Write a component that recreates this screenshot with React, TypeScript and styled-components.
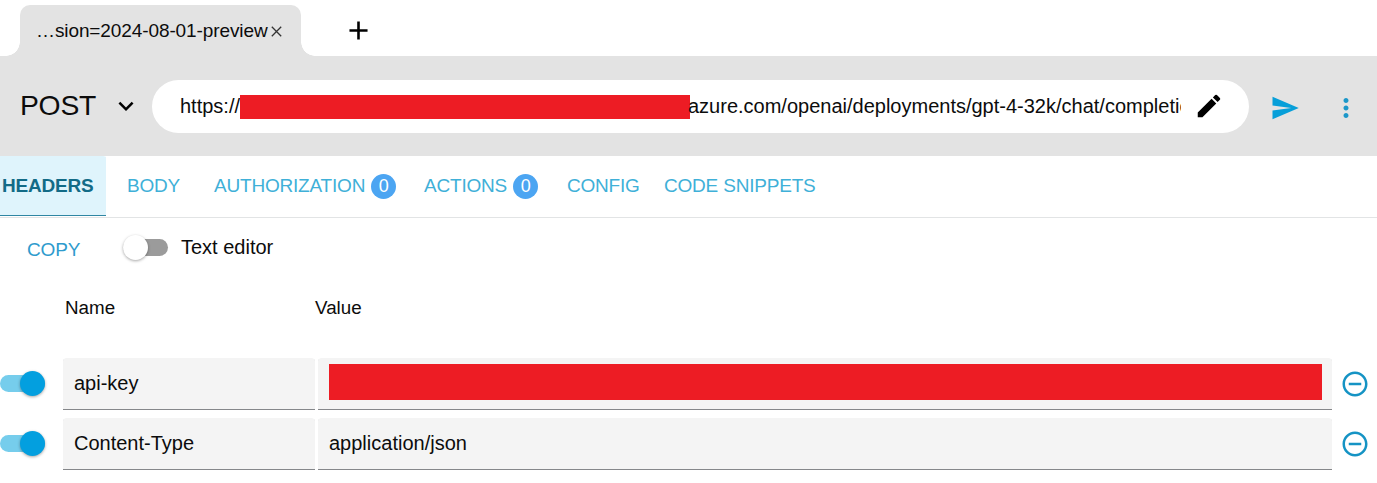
import React from 'react';
import styled, { createGlobalStyle } from 'styled-components';
import {
  MdAdd,
  MdEdit,
  MdExpandMore,
  MdMoreVert,
  MdRemoveCircleOutline,
  MdSend,
} from 'react-icons/md';

const GlobalStyle = createGlobalStyle`
  *, *::before, *::after { box-sizing: border-box; }
  body {
    margin: 0;
    background: #fff;
    color: #0c0c0c;
    font-family: "Liberation Sans", Arial, sans-serif;
    font-size: 20px;
    overflow: hidden;
  }
`;

const Page = styled.div`
  display: flex;
  flex-direction: column;
  width: 1377px;
  height: 483px;
  background: #fff;
`;

const TabStrip = styled.div`
  display: flex;
  height: 56px;
  padding: 5px 0 0 20px;
`;

const RequestTab = styled.div`
  position: relative;
  display: flex;
  align-items: center;
  gap: 3px;
  width: 281px;
  height: 51px;
  padding: 1px 0 0 16px;
  border-radius: 10px 10px 0 0;
  background: #e3e3e3;
  font-size: 19px;
  letter-spacing: -0.1px;
  white-space: nowrap;

  &::before,
  &::after {
    content: '';
    position: absolute;
    bottom: 0;
    width: 14px;
    height: 14px;
  }
  &::before {
    right: 100%;
    background: radial-gradient(circle at 0 0, transparent 13.5px, #e3e3e3 14px);
  }
  &::after {
    left: 100%;
    background: radial-gradient(circle at 100% 0, transparent 13.5px, #e3e3e3 14px);
  }
`;

const NewTab = styled.button`
  display: flex;
  align-items: center;
  margin-left: 42px;
  padding: 0;
  border: 0;
  background: none;
  color: #000;
`;

const RequestBar = styled.div`
  display: flex;
  align-items: center;
  height: 100px;
  padding: 1px 16px 0 20px;
  background: #e3e3e3;
`;

const Method = styled.div`
  display: flex;
  align-items: center;
  justify-content: space-between;
  width: 121px;
  margin: 0 11px 2px 0;
  font-size: 28.3px;
  letter-spacing: -0.25px;
`;

const UrlField = styled.div`
  display: flex;
  align-items: center;
  width: 1097px;
  height: 53px;
  padding: 0 25px 0 28px;
  border-radius: 27px;
  background: #fff;
`;

const UrlText = styled.div`
  display: flex;
  align-items: center;
  width: 1001px;
  margin-right: 13px;
  overflow: hidden;
  white-space: nowrap;
`;

const Scheme = styled.span`
  width: 60px;
`;

const UrlTail = styled.span`
  margin-left: -2px;
`;

const Redacted = styled.span<{ $width: number; $height: number }>`
  flex: none;
  width: ${(p) => p.$width}px;
  height: ${(p) => p.$height}px;
  background: #ed1c24;
`;

const IconButton = styled.button<{
  $left?: number;
  $top?: number;
  $bottom?: number;
  $color?: string;
}>`
  display: flex;
  flex: none;
  margin: 0 0 0 ${(p) => p.$left ?? 0}px;
  padding: ${(p) => p.$top ?? 0}px 0 ${(p) => p.$bottom ?? 0}px;
  border: 0;
  background: none;
  color: ${(p) => p.$color ?? '#079fd9'};
`;

const SectionTabs = styled.div`
  display: flex;
  height: 62px;
  border-bottom: 1px solid #e2e4e5;
`;

const SectionTab = styled.div<{ $width: number; $active?: boolean }>`
  display: flex;
  align-items: center;
  gap: 6px;
  width: ${(p) => p.$width}px;
  height: 60px;
  margin-right: ${(p) => (p.$active ? 19 : 0)}px;
  padding-left: 2px;
  border-radius: 0 3px 0 0;
  background: ${(p) => (p.$active ? '#dff4fc' : 'none')};
  box-shadow: ${(p) => (p.$active ? 'inset 0 -1px #2f86a3' : 'none')};
  color: ${(p) => (p.$active ? '#126b87' : '#3fb0d8')};
  font-size: 19px;
  font-weight: ${(p) => (p.$active ? 700 : 400)};
  letter-spacing: -0.2px;
  white-space: nowrap;
`;

const Count = styled.span`
  display: flex;
  align-items: center;
  justify-content: center;
  width: 25px;
  height: 25px;
  margin-top: 1px;
  padding-bottom: 1px;
  border-radius: 50%;
  background: #4ca5f2;
  color: #fff;
  font-size: 18px;
`;

const Tools = styled.div`
  display: flex;
  align-items: center;
  height: 60px;
  padding: 0 0 2px 27px;
`;

const CopyButton = styled.button`
  width: 96px;
  padding: 5px 0 0;
  border: 0;
  background: none;
  color: #2e9bcd;
  font: inherit;
  font-size: 19px;
  letter-spacing: -0.15px;
  text-align: left;
`;

const Switch = styled.span<{ $on?: boolean }>`
  display: flex;
  flex: none;
  position: relative;
  justify-content: ${(p) => (p.$on ? 'flex-end' : 'flex-start')};
  width: 45px;
  height: 25px;

  &::before {
    content: '';
    position: absolute;
    inset: 4px 0;
    border-radius: 9px;
    background: ${(p) => (p.$on ? '#76cdec' : '#9b9b9b')};
  }
  &::after {
    content: '';
    position: relative;
    width: 25px;
    height: 25px;
    border-radius: 50%;
    background: ${(p) => (p.$on ? '#039fdf' : '#fff')};
    box-shadow: 0 1px 3px rgba(0, 0, 0, 0.35);
  }
`;

const SwitchLabel = styled.span`
  margin-left: 13px;
  color: #0c0c0c;
`;

const ColumnTitles = styled.div`
  display: grid;
  grid-template-columns: 250px 1fr;
  align-items: center;
  height: 60px;
  padding-left: 65px;
  font-size: 18.8px;
`;

const HeaderRows = styled.div`
  display: flex;
  flex-direction: column;
  gap: 8px;
  padding-top: 20px;
`;

const HeaderRow = styled.div`
  display: flex;
  align-items: center;
  height: 52px;
`;

const SwitchCell = styled.div`
  width: 63px;
  padding-bottom: 2px;
`;

const Cell = styled.div<{ $width: number; $lift?: number }>`
  display: flex;
  align-items: center;
  width: ${(p) => p.$width}px;
  height: 52px;
  margin-right: 3px;
  padding: 0 0 ${(p) => p.$lift ?? 1}px 11px;
  border-radius: 4px 4px 0 0;
  background: #f4f4f4;
  box-shadow: inset 0 -1px #85878a;
`;

const CloseIcon = () => (
  <svg width="11" height="11" viewBox="0 0 11 11" stroke="#333" strokeWidth="1.3">
    <path d="M.8.8l9.4 9.4M10.2.8L.8 10.2" />
  </svg>
);

const sections = [
  { label: 'HEADERS', width: 106, active: true },
  { label: 'BODY', width: 87 },
  { label: 'AUTHORIZATION', width: 210, count: 0 },
  { label: 'ACTIONS', width: 143, count: 0 },
  { label: 'CONFIG', width: 97 },
  { label: 'CODE SNIPPETS', width: 160 },
];

const headers: { name: string; value?: string }[] = [
  { name: 'api-key' },
  { name: 'Content-Type', value: 'application/json' },
];

export default function App() {
  return (
    <Page>
      <GlobalStyle />
      <TabStrip>
        <RequestTab>
          <span>…sion=2024-08-01-preview</span>
          <CloseIcon />
        </RequestTab>
        <NewTab aria-label="New tab">
          <MdAdd size={31} />
        </NewTab>
      </TabStrip>

      <RequestBar>
        <Method>
          <span>POST</span>
          <MdExpandMore size={30} color="#000" />
        </Method>
        <UrlField>
          <UrlText>
            <Scheme>https://</Scheme>
            <Redacted $width={450} $height={24} />
            <UrlTail>azure.com/openai/deployments/gpt-4-32k/chat/completions</UrlTail>
          </UrlText>
          <IconButton $color="#000" $bottom={2} aria-label="Edit">
            <MdEdit size={30} />
          </IconButton>
        </UrlField>
        <IconButton $left={21} $top={2} aria-label="Send">
          <MdSend size={30} />
        </IconButton>
        <IconButton $left={31} $top={2} $color="#1c97c9" aria-label="More">
          <MdMoreVert size={30} />
        </IconButton>
      </RequestBar>

      <SectionTabs>
        {sections.map((s) => (
          <SectionTab key={s.label} $width={s.width} $active={s.active}>
            {s.label}
            {s.count !== undefined && <Count>{s.count}</Count>}
          </SectionTab>
        ))}
      </SectionTabs>

      <Tools>
        <CopyButton>COPY</CopyButton>
        <Switch />
        <SwitchLabel>Text editor</SwitchLabel>
      </Tools>

      <ColumnTitles>
        <span>Name</span>
        <span>Value</span>
      </ColumnTitles>

      <HeaderRows>
        {headers.map((h) => (
          <HeaderRow key={h.name}>
            <SwitchCell>
              <Switch $on />
            </SwitchCell>
            <Cell $width={252}>{h.name}</Cell>
            <Cell $width={1014} $lift={h.value ? 1 : 4}>
              {h.value ?? <Redacted $width={993} $height={36} />}
            </Cell>
            <IconButton $left={5} $color="#1593c4" aria-label="Remove">
              <MdRemoveCircleOutline size={30} />
            </IconButton>
          </HeaderRow>
        ))}
      </HeaderRows>
    </Page>
  );
}
